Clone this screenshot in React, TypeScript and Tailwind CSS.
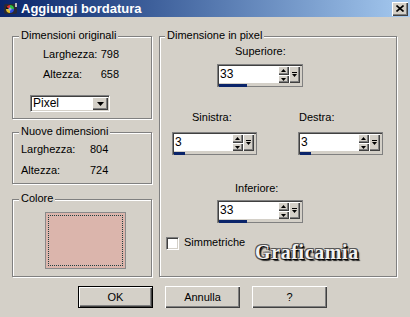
import React from "react";

const raised =
  "bg-[#d4d0c8] shadow-[inset_1px_1px_0_#fff,inset_-1px_-1px_0_#404040,inset_-2px_-2px_0_#808080]";

function Group({
  label,
  className,
  labelPos,
  children,
}: {
  label: string;
  className: string;
  labelPos: string;
  children?: React.ReactNode;
}) {
  return (
    <div
      className={`relative border border-[#808080] shadow-[inset_1px_1px_0_#fff,1px_1px_0_#fff] ${className}`}
    >
      <span
        className={`absolute top-[-8px] px-[2px] bg-[#d4d0c8] leading-[13px] ${labelPos}`}
      >
        {label}
      </span>
      {children}
    </div>
  );
}

function Tri({ up }: { up?: boolean }) {
  return (
    <svg width="5" height="3" viewBox="0 0 5 3">
      {up ? (
        <polygon points="2.5,0 5,3 0,3" fill="#000" />
      ) : (
        <polygon points="0,0 5,0 2.5,3" fill="#000" />
      )}
    </svg>
  );
}

function Spin({
  value,
  w,
  fill,
}: {
  value: string;
  w: string;
  fill: string;
}) {
  return (
    <div
      className={`flex h-[23px] border border-[#808080] bg-[#d4d0c8] shadow-[inset_1px_1px_0_#404040] pt-[1px] pl-[1px] ${w}`}
    >
      <div className="flex flex-1 flex-col">
        <div className="h-[17px] bg-white pl-[1px] text-[12px] leading-[17px] text-black">
          {value}
        </div>
        <div className="h-[4px] pt-[1px]">
          <div className={`h-[3px] bg-[#0a246a] ${fill}`} />
        </div>
      </div>
      <div className="flex h-[17px] w-[11px] flex-col">
        <div className={`flex h-[9px] items-center justify-center ${raised}`}>
          <Tri up />
        </div>
        <div className={`flex h-[8px] items-center justify-center ${raised}`}>
          <Tri />
        </div>
      </div>
      <div
        className={`flex h-[17px] w-[11px] items-center justify-center ${raised}`}
      >
        <svg width="5" height="6" viewBox="0 0 5 6">
          <rect x="0" y="0" width="5" height="1" fill="#000" />
          <polygon points="0,2 5,2 2.5,5" fill="#000" />
        </svg>
      </div>
      <div className="w-[2px]" />
    </div>
  );
}

export default function App() {
  return (
    <div className="flex h-[317px] w-[410px] flex-col overflow-hidden bg-[#d4d0c8] font-['Liberation_Sans',Arial,sans-serif] text-[11px] text-black">
      {/* Title bar */}
      <div className="flex h-[17px] items-center bg-gradient-to-r from-[#0a246a] to-[#a6caf0] pl-[3px] pr-[2px]">
        <svg width="15" height="14" viewBox="0 0 15 14">
          <rect x="1" y="2" width="13" height="10" rx="2" fill="#2a2a35" />
          <circle cx="7" cy="7" r="4" fill="#111" />
          <path d="M3.5 5 A4 4 0 0 1 7 3 L7 7 Z" fill="#e03030" />
          <path d="M7 3 A4 4 0 0 1 11 7 L7 7 Z" fill="#30c040" />
          <path d="M11 7 A4 4 0 0 1 7 11 L7 7 Z" fill="#3050e0" />
          <path d="M7 11 A4 4 0 0 1 3 7 L7 7 Z" fill="#e0c030" />
          <circle cx="7" cy="7" r="1.6" fill="#9ad" />
          <rect x="12" y="1" width="2" height="4" fill="#bbb" />
        </svg>
        <span className="ml-[3px] text-[13px] font-bold leading-[15px] text-white">
          Aggiungi bordatura
        </span>
        <div
          className={`ml-auto flex h-[14px] w-[16px] items-center justify-center ${raised}`}
        >
          <svg width="8" height="7" viewBox="0 0 8 7">
            <path
              d="M0.5 0.5 L7.5 6.5 M7.5 0.5 L0.5 6.5"
              stroke="#000"
              strokeWidth="1.6"
            />
          </svg>
        </div>
      </div>

      {/* Body */}
      <div className="flex gap-[7px] pl-[12px] pt-[19px]">
        {/* Left column */}
        <div className="flex w-[140px] flex-col">
          <Group
            label="Dimensioni originali"
            className="h-[83px]"
            labelPos="left-[6px]"
          >
            <div className="flex flex-col gap-[7px] pl-[30px] pt-[11px] leading-[13px]">
              <div className="flex">
                <span className="w-[54px]">Larghezza:</span>
                <span className="w-[22px] text-right">798</span>
              </div>
              <div className="flex">
                <span className="w-[54px]">Altezza:</span>
                <span className="w-[22px] text-right">658</span>
              </div>
            </div>
            <div className="ml-[17px] mt-[14px] flex h-[17px] w-[80px] border border-b-white border-l-[#808080] border-r-white border-t-[#808080] bg-white shadow-[inset_1px_1px_0_#404040,inset_-1px_-1px_0_#d4d0c8]">
              <span className="flex-1 pl-[2px] text-[12px] leading-[15px]">
                Pixel
              </span>
              <div
                className={`my-[1px] mr-[1px] flex w-[16px] items-center justify-center ${raised}`}
              >
                <svg width="7" height="4" viewBox="0 0 7 4">
                  <polygon points="0,0 7,0 3.5,4" fill="#000" />
                </svg>
              </div>
            </div>
          </Group>

          <Group
            label="Nuove dimensioni"
            className="mt-[13px] h-[52px]"
            labelPos="left-[6px]"
          >
            <div className="flex flex-col gap-[8px] pl-[8px] pt-[10px] leading-[13px]">
              <div className="flex">
                <span className="w-[69px]">Larghezza:</span>
                <span>804</span>
              </div>
              <div className="flex">
                <span className="w-[69px]">Altezza:</span>
                <span>724</span>
              </div>
            </div>
          </Group>

          <Group
            label="Colore"
            className="mt-[15px] h-[78px]"
            labelPos="left-[6px]"
          >
            <div className="ml-[32px] mt-[12px] flex h-[57px] w-[81px] border border-[#8a8a8a] bg-[#dbb5ac] p-[2px]">
              <div className="flex-1 border border-dotted border-[#1f3f40]" />
            </div>
          </Group>
        </div>

        {/* Right group */}
        <Group
          label="Dimensione in pixel"
          className="h-[241px] w-[238px]"
          labelPos="left-[5px]"
        >
          <div className="flex flex-col leading-[13px]">
            <div className="ml-[57px] mt-[8px] flex w-[86px] flex-col">
              <span className="pl-[18px]">Superiore:</span>
              <div className="mt-[6px]">
                <Spin value="33" w="w-[86px]" fill="w-[28px]" />
              </div>
            </div>

            <div className="mt-[24px] flex">
              <div className="ml-[12px] flex w-[85px] flex-col">
                <span className="pl-[20px]">Sinistra:</span>
                <div className="mt-[8px]">
                  <Spin value="3" w="w-[85px]" fill="w-[11px]" />
                </div>
              </div>
              <div className="ml-[41px] flex w-[85px] flex-col">
                <span className="pl-[1px]">Destra:</span>
                <div className="mt-[8px]">
                  <Spin value="3" w="w-[85px]" fill="w-[11px]" />
                </div>
              </div>
            </div>

            <div className="ml-[57px] mt-[27px] flex w-[86px] flex-col">
              <span className="pl-[18px]">Inferiore:</span>
              <div className="mt-[5px]">
                <Spin value="33" w="w-[86px]" fill="w-[28px]" />
              </div>
            </div>

            <div className="mt-[13px] flex items-start">
              <div className="ml-[6px] flex w-[89px] items-start">
                <div className="mt-[1px] h-[13px] w-[13px] border border-b-white border-l-[#808080] border-r-white border-t-[#808080] bg-white shadow-[inset_1px_1px_0_#404040,inset_-1px_-1px_0_#d4d0c8]" />
                <span className="ml-[5px]">Simmetriche</span>
              </div>
              <span className="mt-[5px] font-['Liberation_Serif','Times_New_Roman',serif] text-[20px] font-bold leading-[22px] tracking-[0.6px] text-[#f2f2f2] [text-shadow:1px_1px_0_#000,-1px_-1px_0_#555,1px_-1px_0_#555,-1px_1px_0_#555,2px_2px_1px_#222]">
                Graficamia
              </span>
            </div>
          </div>
        </Group>
      </div>

      {/* Buttons */}
      <div className="mt-[9px] flex gap-[12px] pl-[78px]">
        <div
          className={`flex h-[22px] w-[75px] items-center justify-center border border-black ${raised}`}
        >
          OK
        </div>
        <div
          className={`flex h-[22px] w-[75px] items-center justify-center ${raised}`}
        >
          Annulla
        </div>
        <div
          className={`flex h-[22px] w-[75px] items-center justify-center ${raised}`}
        >
          ?
        </div>
      </div>
    </div>
  );
}
